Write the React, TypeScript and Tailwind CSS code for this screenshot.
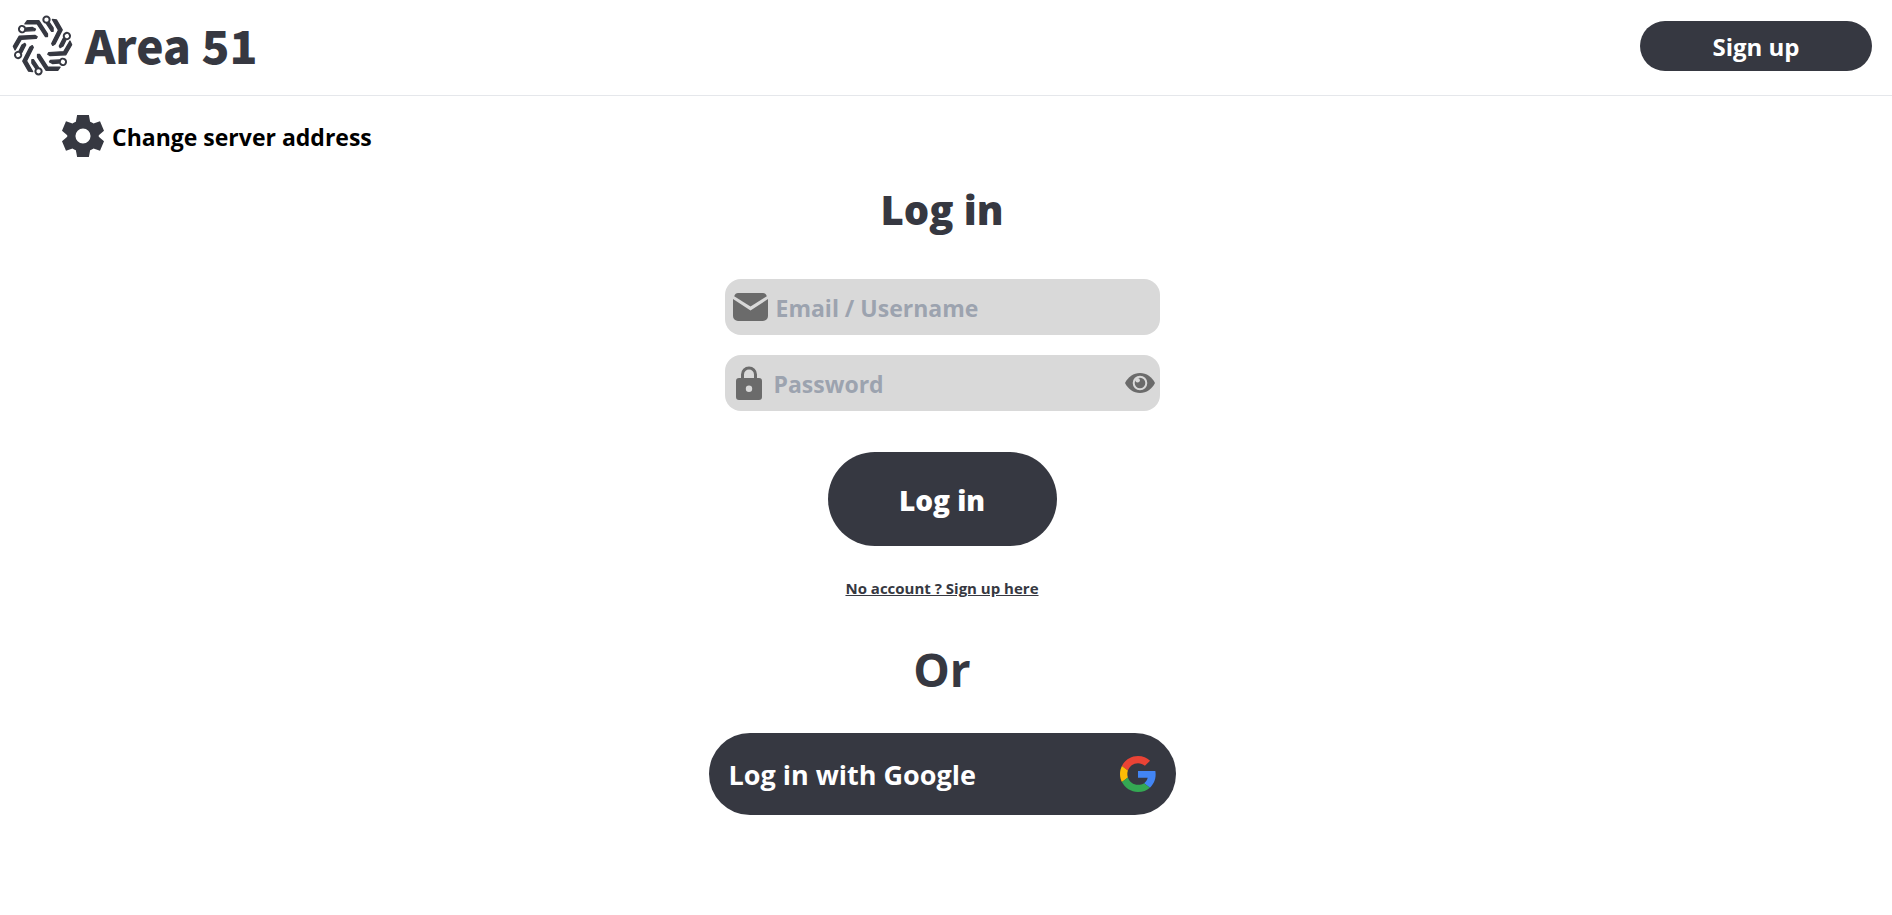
import React from "react";

const SPOKES = [0, 60, 120, 180, 240, 300];

function Logo() {
  return (
    <svg viewBox="-92 -92 184 184" className="size-[61px] text-[#363841]" fill="currentColor" stroke="currentColor" strokeLinejoin="round" aria-hidden="true">
      {SPOKES.map((angle) => (
        <g key={angle} transform={`rotate(${angle})`}>
          <path d="M-53 -65L-46 -75H-11L15 -35V-27H9L-16 -65Z" strokeWidth="4" />
          <path d="M12 -66L21 -69L32 -53V-43H27Z" strokeWidth="4" />
          <circle cx="12" cy="-78" r="9.500" fill="white" strokeWidth="6" />
        </g>
      ))}
    </svg>
  );
}

function GearIcon() {
  return (
    <svg viewBox="2 2 20 20" className="size-[42px]" fill="#363841" aria-hidden="true">
      <path fillRule="evenodd" d="M9.2 2h5.6l.6 3.2c.6.2 1.1.5 1.6.9l3.1-1.1L22 9.5l-2.500 2.100v.8l2.500 2.100-1.900 4.500-3.100-1.100c-.5.4-1 .7-1.600.9L14.800 22H9.200l-.6-3.200c-.6-.2-1.100-.5-1.600-.9l-3.100 1.100L2 14.500l2.500-2.100v-.8L2 9.500 3.900 5 7 6.100c.5-.4 1-.7 1.600-.9zM12 8.400a3.600 3.600 0 1 0 0 7.200 3.600 3.600 0 0 0 0-7.200z" />
    </svg>
  );
}

function MailIcon() {
  return (
    <svg viewBox="0 0 35 28" className="h-7 w-[35px] shrink-0" fill="#6b6b6b" aria-hidden="true">
      <path d="M1.200 3.200C2 1 3.200 0 5 0h25c1.800 0 3 1 3.800 3.200L17.500 13.500z" />
      <path d="M0 6l17.500 11.500L35 6v17a5 5 0 0 1-5 5H5a5 5 0 0 1-5-5z" />
    </svg>
  );
}

function LockIcon() {
  return (
    <svg viewBox="0 0 26 34" className="h-[34px] w-[26px] shrink-0" aria-hidden="true">
      <path d="M6.500 13V8.500a6.500 6.500 0 0 1 13 0V13" fill="none" stroke="#6b6b6b" strokeWidth="3" />
      <path fill="#6b6b6b" fillRule="evenodd" d="M3 12h20a3 3 0 0 1 3 3v16a3 3 0 0 1-3 3H3a3 3 0 0 1-3-3V15a3 3 0 0 1 3-3zm10 7.500a3.200 3.200 0 1 0 0 6.400 3.200 3.200 0 0 0 0-6.400z" />
    </svg>
  );
}

function EyeIcon() {
  return (
    <svg viewBox="0 0 30 20" className="h-5 w-[30px]" aria-hidden="true">
      <path d="M0 10C3 4 8.500 0 15 0s12 4 15 10c-3 6-8.500 10-15 10S3 16 0 10z" fill="#6b6b6b" />
      <circle cx="15" cy="10" r="6.300" fill="none" stroke="#d9d9d9" strokeWidth="2" />
      <circle cx="12.600" cy="7.200" r="2.300" fill="#d9d9d9" />
    </svg>
  );
}

function GoogleIcon() {
  return (
    <svg viewBox="0 0 48 48" className="size-9" aria-hidden="true">
      <path fill="#EA4335" d="M24 9.500c3.540 0 6.710 1.220 9.210 3.600l6.850-6.850C35.900 2.380 30.470 0 24 0 14.620 0 6.510 5.380 2.560 13.220l7.980 6.190C12.430 13.720 17.740 9.500 24 9.500z" />
      <path fill="#4285F4" d="M47.500 24.550c0-1.570-.15-3.090-.38-4.550H24v9.020h12.940c-.58 2.960-2.260 5.480-4.780 7.180l7.730 6c4.510-4.180 7.610-10.360 7.610-17.650z" />
      <path fill="#FBBC05" d="M10.530 28.590c-.48-1.450-.76-2.990-.76-4.590s.27-3.140.76-4.590l-7.980-6.190C.92 16.460 0 20.120 0 24c0 3.880.92 7.540 2.560 10.780l7.970-6.190z" />
      <path fill="#34A853" d="M24 48c6.480 0 11.930-2.130 15.890-5.810l-7.730-6c-2.150 1.450-4.920 2.300-8.160 2.300-6.260 0-11.570-4.220-13.470-9.910l-7.980 6.190C6.510 42.620 14.620 48 24 48z" />
    </svg>
  );
}

export default function App() {
  return (
    <div className="min-h-screen bg-white font-['Open_Sans','Noto_Sans',sans-serif] text-[#363841]">
      <header className="flex h-24 items-center justify-between border-b border-gray-200 pr-5 pb-1 pl-3">
        <a href="#home" className="flex items-center gap-3">
          <Logo />
          <span className="pb-1 font-['Noto_Sans_CJK_SC',sans-serif] text-[46px] leading-[60px] font-black">Area 51</span>
        </a>
        <button type="button" className="h-[50px] w-58 rounded-full bg-[#363841] pt-0.5 text-2xl font-bold text-white">
          Sign up
        </button>
      </header>

      <main className="flex flex-col pt-4 pr-2">
        <button type="button" className="ml-[62px] flex h-12 items-center gap-2 self-start text-[23px] font-bold text-black">
          <GearIcon />
          <span className="pt-0.5">Change server address</span>
        </button>

        <form className="flex flex-col items-center pt-5" onSubmit={(event) => event.preventDefault()}>
          <h1 className="text-[40px] leading-[60px] font-extrabold">Log in</h1>

          <label className="mt-[39px] flex h-14 w-[435px] items-center gap-2 rounded-2xl bg-[#d9d9d9] px-2">
            <MailIcon />
            <input
              type="text"
              aria-label="Email / Username"
              placeholder="Email / Username"
              className="min-w-0 flex-1 bg-transparent pt-0.5 text-[23px] font-bold outline-none placeholder:text-[#9ca3af]"
            />
          </label>

          <div className="mt-5 flex h-14 w-[435px] items-center rounded-2xl bg-[#d9d9d9] pr-[5px] pl-[11px]">
            <label htmlFor="password" className="pr-3">
              <LockIcon />
            </label>
            <input
              id="password"
              type="password"
              aria-label="Password"
              placeholder="Password"
              className="min-w-0 flex-1 bg-transparent pt-0.5 text-[23px] font-bold outline-none placeholder:text-[#9ca3af]"
            />
            <button type="button" aria-label="Show password">
              <EyeIcon />
            </button>
          </div>

          <button type="submit" className="mt-[41px] h-[94px] w-[229px] rounded-full bg-[#363841] pt-0.5 text-[28px] font-extrabold text-white">
            Log in
          </button>
          <a href="#signup" className="mt-[30px] text-[15px] leading-6 font-bold underline">
            No account ? Sign up here
          </a>
        </form>

        <p className="mt-[33px] text-center text-[46px] leading-[72px] font-bold">Or</p>

        <button type="button" className="mt-7 flex h-[82px] w-[467px] items-center justify-between self-center rounded-full bg-[#363841] px-5 text-[27px] font-bold text-white">
          <span className="pt-0.5">Log in with Google</span>
          <GoogleIcon />
        </button>
      </main>
    </div>
  );
}
